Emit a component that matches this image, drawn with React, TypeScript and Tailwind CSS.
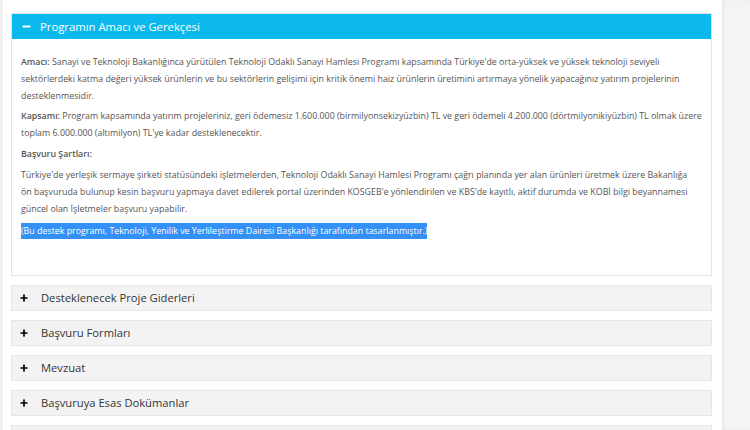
import { Plus, Minus } from "lucide-react"

const rows = [
  "Desteklenecek Proje Giderleri",
  "Başvuru Formları",
  "Mevzuat",
  "Başvuruya Esas Dokümanlar",
  "Sıkça Sorulan Sorular",
]

export default function App() {
  return (
    <div className="flex h-[430px] overflow-hidden bg-white font-['Open_Sans',sans-serif]">
      <div className="w-[3px] bg-[#efefef]" />
      <main className="w-[719px] pl-[8px] pr-[10px] pt-[13px]">
        <section className="border border-[#e3e3e3]">
          <div className="flex h-[25px] items-center bg-[#0cb9ed] pl-[9px] text-white">
            <Minus className="h-[11px] w-[11px]" strokeWidth={4} />
            <span className="ml-[8px] text-[11.3px] leading-none">Programın Amacı ve Gerekçesi</span>
          </div>
          <div className="pl-[9px] pr-[6px] pt-[15px] pb-[35px] text-[8.85px] leading-[17px] text-[#555]">
            <p className="mb-[3px]">
              <b className="font-semibold">Amacı:</b> Sanayi ve Teknoloji Bakanlığınca yürütülen Teknoloji Odaklı Sanayi Hamlesi Programı kapsamında Türkiye'de orta-yüksek ve yüksek teknoloji seviyeli sektörlerdeki katma değeri yüksek ürünlerin ve bu sektörlerin gelişimi için kritik önemi haiz ürünlerin üretimini artırmaya yönelik yapacağınız yatırım projelerinin desteklenmesidir.
            </p>
            <p className="mb-[4px]">
              <b className="font-semibold">Kapsamı:</b> Program kapsamında yatırım projeleriniz, geri ödemesiz 1.600.000 (birmilyonsekizyüzbin) TL ve geri ödemeli 4.200.000 (dörtmilyonikiyüzbin) TL olmak üzere toplam 6.000.000 (altımilyon) TL'ye kadar desteklenecektir.
            </p>
            <p className="mb-[4px] font-semibold">Başvuru Şartları:</p>
            <p className="mb-[5px]">
              Türkiye'de yerleşik sermaye şirketi statüsündeki işletmelerden, Teknoloji Odaklı Sanayi Hamlesi Programı çağrı planında yer alan ürünleri üretmek üzere Bakanlığa
              <br />
              ön başvuruda bulunup kesin başvuru yapmaya davet edilerek portal üzerinden KOSGEB'e yönlendirilen ve KBS'de kayıtlı, aktif durumda ve KOBİ bilgi beyannamesi güncel olan İşletmeler başvuru yapabilir.
            </p>
            <p>
              <span className="bg-[#3390f6] py-[2px] text-white">(Bu destek programı, Teknoloji, Yenilik ve Yerlileştirme Dairesi Başkanlığı tarafından tasarlanmıştır.)</span>
            </p>
          </div>
        </section>
        <div className="mt-[9px] flex flex-col gap-[9px]">
          {rows.map((r) => (
            <div
              key={r}
              className="flex h-[26px] items-center border border-[#e6e6e6] bg-[#f3f3f4] pl-[7px] text-[#333]"
            >
              <Plus className="h-[10px] w-[10px] text-black" strokeWidth={4} />
              <span className="ml-[12px] text-[11.2px]">{r}</span>
            </div>
          ))}
        </div>
      </main>
      <aside className="flex-1 bg-[#f3f4f6] shadow-[inset_2px_0_3px_rgba(0,0,0,0.05)]" />
    </div>
  )
}
